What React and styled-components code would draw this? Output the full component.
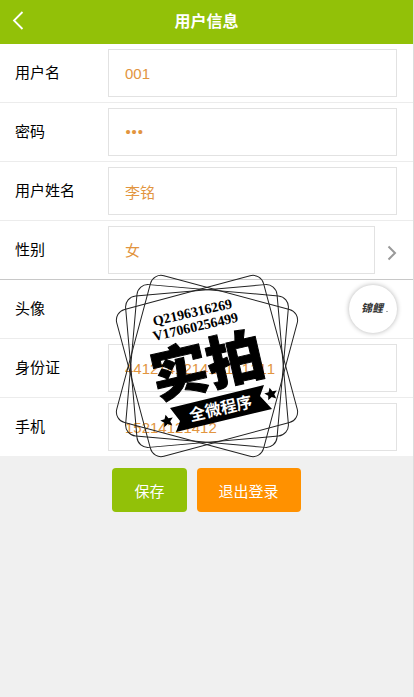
import styled, { createGlobalStyle } from 'styled-components';

const GlobalStyle = createGlobalStyle`
    * {
        box-sizing: border-box;
    }

    body {
        margin: 0;
        background: #f0f0f0;
        font-family: 'Liberation Sans', 'Noto Sans CJK SC', sans-serif;
        font-size: 15px;
        color: #000;
    }
`;

const Page = styled.div`
    min-height: 100vh;
    border-right: 1px solid #dcdcdc;
`;

const Header = styled.header`
    display: grid;
    grid-template-columns: 44px 1fr 44px;
    align-items: center;
    height: 44px;
    background: #92c108;
    color: #fff;
`;

const BackButton = styled.button`
    display: flex;
    align-items: center;
    height: 44px;
    padding: 0 0 4px 10px;
    border: 0;
    background: none;
    color: inherit;
`;

const Title = styled.h1`
    margin: 0;
    font-size: 16px;
    line-height: 44px;
    text-align: center;
`;

const Form = styled.form`
    position: relative;
    margin: 0;
`;

const Row = styled.div`
    display: flex;
    align-items: center;
    height: 59px;
    padding: 0 16px 0 15px;
    border-bottom: 1px solid ${(props) => props.$line || '#ececec'};
    background: #fff;
`;

const Label = styled.label`
    flex: 0 0 93px;
    line-height: 24px;
`;

const Input = styled.input`
    flex: 1;
    min-width: 0;
    height: 48px;
    padding: 0 16px;
    border: 1px solid #e2e2e2;
    border-radius: 0;
    background: #fff;
    color: #e2953f;
    font: inherit;
    font-kerning: none;
    outline: none;
`;

const PasswordInput = styled(Input).attrs({ type: 'password' })`
    font-family: Roboto, sans-serif;
    font-size: 17px;
    font-weight: bold;
`;

const Select = styled(Input).attrs({ as: 'select' })`
    appearance: none;
`;

const Arrow = styled.svg`
    flex: none;
    margin: 5px 0 0 12px;
`;

const Avatar = styled.button`
    width: 48px;
    height: 48px;
    margin-left: auto;
    padding: 0;
    border: 0;
    border-radius: 50%;
    background: #fff;
    box-shadow: 0 0 5px rgba(0, 0, 0, 0.3);
`;

const AvatarText = styled.text`
    font: italic bold 11px 'Noto Sans CJK SC', sans-serif;
    fill: #333;
`;

const Actions = styled.div`
    display: flex;
    justify-content: center;
    gap: 10px;
    padding: 11px 0;
`;

const Button = styled.button`
    height: 44px;
    padding: 0 22px;
    border: 0;
    border-radius: 4px;
    background: ${(props) => props.$color};
    color: #fff;
    font: inherit;
`;

const Stamp = styled.svg`
    position: absolute;
    top: 226px;
    left: 50%;
    transform: translateX(-50%);
    pointer-events: none;
`;

const StampNumber = styled.text`
    font: bold 14px 'Liberation Serif', serif;
`;

const StampTitle = styled.text`
    font: 900 57px 'Noto Sans CJK SC', sans-serif;
    stroke: #000;
    stroke-width: 1px;
`;

const StampRibbon = styled.text`
    font: bold 16px 'Noto Sans CJK SC', sans-serif;
    fill: #fff;
`;

const star = 'M0 -6.5 L2 -2.3 6.4 -2 3.1 1.1 4.1 5.5 0 3.2 -4.1 5.5 -3.1 1.1 -6.4 -2 -2 -2.3Z';

export default function App() {
    return (
        <Page>
            <GlobalStyle />
            <Header>
                <BackButton aria-label="返回">
                    <svg width="16" height="20" fill="none" stroke="#fff" strokeWidth="1.8">
                        <path d="M12.5 2 L4 10.5 12.5 19" />
                    </svg>
                </BackButton>
                <Title>用户信息</Title>
            </Header>
            <Form onSubmit={(e) => e.preventDefault()}>
                <Row>
                    <Label htmlFor="username">用户名</Label>
                    <Input id="username" defaultValue="001" />
                </Row>
                <Row>
                    <Label htmlFor="password">密码</Label>
                    <PasswordInput id="password" defaultValue="001" />
                </Row>
                <Row>
                    <Label htmlFor="name">用户姓名</Label>
                    <Input id="name" defaultValue="李铭" />
                </Row>
                <Row $line="#c8c8c8">
                    <Label htmlFor="gender">性别</Label>
                    <Select id="gender" defaultValue="女">
                        <option>女</option>
                        <option>男</option>
                    </Select>
                    <Arrow width="10" height="16" fill="none" stroke="#999" strokeWidth="2">
                        <path d="M1.5 1.5 L8 8 1.5 14.5" />
                    </Arrow>
                </Row>
                <Row>
                    <Label htmlFor="avatar">头像</Label>
                    <Avatar id="avatar" type="button">
                        <svg width="48" height="48">
                            <AvatarText x="12" y="27">
                                锦鲤
                            </AvatarText>
                            <path d="M37 26.5 H39" stroke="#aaa" />
                        </svg>
                    </Avatar>
                </Row>
                <Row>
                    <Label htmlFor="idcard">身份证</Label>
                    <Input id="idcard" defaultValue="441214121411111111" />
                </Row>
                <Row $line="#f0f0f0">
                    <Label htmlFor="phone">手机</Label>
                    <Input id="phone" defaultValue="15214121412" />
                </Row>
                <Actions>
                    <Button type="submit" $color="#92c108">
                        保存
                    </Button>
                    <Button type="button" $color="#ff9100">
                        退出登录
                    </Button>
                </Actions>
                <Stamp width="192" height="192" viewBox="-96 -96 192 192">
                    <g fill="none" stroke="#222" strokeWidth="1">
                        {[-15, -5, 5, 15].map((angle) => (
                            <rect
                                key={angle}
                                x="-76"
                                y="-76"
                                width="152"
                                height="152"
                                rx="11"
                                transform={`rotate(${angle})`}
                            />
                        ))}
                    </g>
                    <StampNumber transform="translate(-53 -40) rotate(-13)">Q2196316269</StampNumber>
                    <StampNumber transform="translate(-53 -25) rotate(-13)">V17060256499</StampNumber>
                    <StampTitle textAnchor="middle" transform="translate(5 20) rotate(-13)">
                        实拍
                    </StampTitle>
                    <path d="M-37 42 L57 19 53 30 65 43 -31 66 -27 55Z" />
                    <StampRibbon textAnchor="middle" transform="translate(15 48) rotate(-13)">
                        全微程序
                    </StampRibbon>
                    <path d={star} transform="translate(-40 55) rotate(-13)" />
                    <path d={star} transform="translate(64 28) rotate(-13)" />
                </Stamp>
            </Form>
        </Page>
    );
}
